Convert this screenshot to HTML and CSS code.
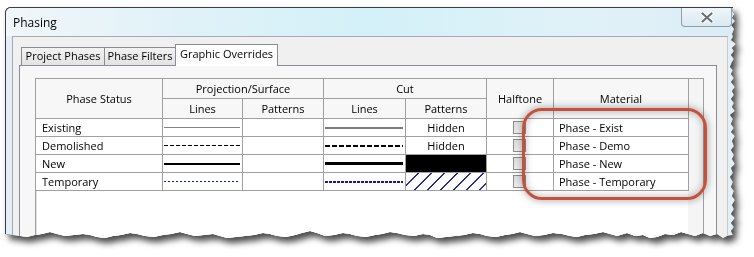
FILE: index.html
```html
<!DOCTYPE html>
<html>
<head>
  <meta charset="UTF-8" />
  <title>Phasing</title>
  <link rel="stylesheet" href="styles.css">
</head>
<body>

  <div class="shot">
    <div class="dialog">
      <div class="titlebar">
        <span class="title">Phasing</span>
        <button class="close" type="button">
          <svg width="14" height="11" viewBox="0 0 14 11">
            <path d="M2.5 1.5 L11.5 9.5 M11.5 1.5 L2.5 9.5" stroke="#fff" stroke-width="4.2" stroke-linecap="round"/>
            <path d="M2.5 1.5 L11.5 9.5 M11.5 1.5 L2.5 9.5" stroke="#6b6f74" stroke-width="2.2" stroke-linecap="round"/>
          </svg>
        </button>
      </div>

      <div class="frame">
        <div class="client">
          <div class="tabs">
            <div class="tab tab-phases">Project Phases</div>
            <div class="tab tab-filters">Phase Filters</div>
            <div class="tab tab-overrides active">Graphic Overrides</div>
          </div>

          <div class="panel">
            <div class="grid-box">
              <div class="grid">
                <div class="hd span2 c-status">Phase Status</div>
                <div class="hd span-proj">Projection/Surface</div>
                <div class="hd span-cut">Cut</div>
                <div class="hd span2 c-half">Halftone</div>
                <div class="hd span2 c-mat">Material</div>
                <div class="hd">Lines</div>
                <div class="hd">Patterns</div>
                <div class="hd">Lines</div>
                <div class="hd">Patterns</div>

                <!-- Existing -->
                <div class="cell name">Existing</div>
                <div class="cell"><div class="ln ln-thin-grey"></div></div>
                <div class="cell"></div>
                <div class="cell"><div class="ln ln-thick-grey"></div></div>
                <div class="cell center">Hidden</div>
                <div class="cell center"><span class="check"></span></div>
                <div class="cell mat">Phase - Exist</div>

                <!-- Demolished -->
                <div class="cell name">Demolished</div>
                <div class="cell"><div class="ln ln-dash"></div></div>
                <div class="cell"></div>
                <div class="cell"><div class="ln ln-dash-bold"></div></div>
                <div class="cell center">Hidden</div>
                <div class="cell center"><span class="check"></span></div>
                <div class="cell mat">Phase - Demo</div>

                <!-- New -->
                <div class="cell name">New</div>
                <div class="cell"><div class="ln ln-solid"></div></div>
                <div class="cell"></div>
                <div class="cell"><div class="ln ln-solid-bold"></div></div>
                <div class="cell fill-black"></div>
                <div class="cell center"><span class="check"></span></div>
                <div class="cell mat">Phase - New</div>

                <!-- Temporary -->
                <div class="cell name">Temporary</div>
                <div class="cell"><div class="ln ln-dot"></div></div>
                <div class="cell"></div>
                <div class="cell"><div class="ln ln-dot-bold"></div></div>
                <div class="cell fill-hatch"></div>
                <div class="cell center"><span class="check"></span></div>
                <div class="cell mat">Phase - Temporary</div>
              </div>

              <div class="callout"></div>
            </div>
          </div>
        </div>
      </div>
    </div>
  </div>

</body>
</html>
```

FILE: styles.css
```css
body {
  margin: 0;
  background: #fff;
  font-family: "Open Sans", "Liberation Sans", sans-serif;
  font-size: 11px;
  color: #000;
}

.shot {
  width: 740px;
  height: 250px;
  padding: 7px 0 0 5px;
  box-sizing: border-box;
  filter: drop-shadow(0 0 0.7px rgba(0, 0, 0, 0.95)) drop-shadow(4px 5px 3px rgba(0, 0, 0, 0.7));
}

.dialog {
  position: relative;
  width: 731px;
  height: 240px;
  border-left: 1px solid #3a3d42;
  border-top: 1px solid #3a3d42;
  border-radius: 6px 0 0 0;
  box-sizing: border-box;
  background: #e4eef4;
  overflow: hidden;
  clip-path: polygon(0 0, 728px 0, 727px 4px, 729px 7px, 727px 11px, 730px 14px, 726px 18px, 729px 22px,
    727px 27px, 728px 30px, 726px 33px, 731px 37px, 727px 41px, 729px 44px, 726px 48px, 729px 52px,
    727px 55px, 725px 60px, 728px 63px, 726px 67px, 729px 71px, 726px 75px, 730px 80px, 727px 84px,
    729px 88px, 726px 92px, 729px 96px, 727px 100px, 730px 104px, 725px 108px, 728px 112px,
    726px 117px, 729px 121px, 726px 125px, 730px 129px, 727px 134px, 729px 139px, 726px 143px,
    729px 148px, 727px 152px, 730px 157px, 726px 161px, 728px 166px, 725px 170px, 728px 175px,
    726px 180px, 729px 184px, 727px 189px, 730px 193px, 727px 198px, 729px 202px, 726px 207px,
    730px 211px, 726px 216px, 729px 220px, 726px 224px, 728px 228px,
    722px 229px, 718px 231px, 712px 227px, 705px 229px, 698px 226px, 690px 229px, 683px 227px,
    676px 225px, 668px 228px, 660px 227px, 652px 230px, 645px 231px, 638px 228px, 630px 229px,
    622px 226px, 612px 229px, 605px 227px, 598px 225px, 589px 227px, 580px 228px, 572px 230px,
    565px 229px, 557px 227px, 548px 226px, 539px 228px, 530px 229px, 522px 227px, 515px 225px,
    507px 227px, 500px 228px, 491px 230px, 482px 229px, 475px 227px, 468px 226px, 459px 228px,
    450px 229px, 441px 230px, 432px 231px, 425px 228px, 418px 227px, 409px 229px, 400px 228px,
    392px 226px, 385px 225px, 377px 227px, 370px 228px, 361px 230px, 352px 229px, 345px 227px,
    338px 226px, 329px 228px, 320px 229px, 312px 226px, 305px 224px, 297px 226px, 290px 228px,
    281px 230px, 272px 229px, 265px 227px, 258px 226px, 249px 228px, 240px 229px, 231px 230px,
    222px 231px, 215px 229px, 208px 227px, 199px 228px, 190px 229px, 182px 227px, 175px 225px,
    166px 227px, 158px 228px, 149px 230px, 140px 229px, 132px 227px, 125px 226px, 116px 228px,
    108px 229px, 100px 231px, 92px 230px, 85px 228px, 78px 227px, 69px 228px, 60px 229px,
    52px 227px, 45px 225px, 37px 227px, 30px 228px, 22px 230px, 15px 229px, 7px 228px, 0 227px);
}

/* title bar */

.titlebar {
  display: flex;
  align-items: flex-start;
  height: 28px;
  padding-left: 7px;
  background: linear-gradient(90deg, #f1f6f9 0%, #dff2f8 25%, #d4f0f8 50%, #e0f2f8 80%, #dcecf5 100%);
}

.title {
  margin-top: 6px;
  font-size: 12px;
  color: #000;
}

.close {
  margin-left: 675px;
  position: absolute;
  left: 0;
  width: 51px;
  height: 19px;
  padding: 0;
  border: 1px solid #8e9eaa;
  border-top: none;
  border-radius: 0 0 4px 4px;
  background: linear-gradient(#eef6fa, #dbe9f1);
  display: flex;
  align-items: center;
  justify-content: center;
}

/* window body */

.frame {
  padding: 0 8px 0 6px;
}

.client {
  border: 1px solid #a3acb4;
  border-right-color: #c4cbd1;
  background: #f0f0f0;
  padding: 7px 10px 0 6px;
  height: 220px;
}

.tabs {
  display: flex;
  align-items: flex-end;
  padding-left: 2px;
  height: 21px;
  position: relative;
  z-index: 1;
}

.tab {
  box-sizing: border-box;
  height: 18px;
  margin-right: -1px;
  border: 1px solid #898c95;
  border-bottom: none;
  background: linear-gradient(#f2f2f2, #e3e3e3);
  text-align: center;
  line-height: 16px;
  white-space: nowrap;
}

.tab-phases { width: 84px; }
.tab-filters { width: 72px; }

.tab-overrides {
  width: 103px;
  height: 22px;
  margin-bottom: -1px;
  background: #fff;
  line-height: 18px;
}

.panel {
  border: 1px solid #898c95;
  background: #f7f7f7;
  padding: 12px 12px 0 15px;
  height: 200px;
}

/* phase grid */

.grid-box {
  position: relative;
  height: 190px;
  border: 1px solid #a0a0a0;
  border-bottom: none;
  box-shadow: inset 1px 0 0 #e2e2e2;
  background: linear-gradient(90deg, #fff 652px, #f5f5f5 652px);
}

.grid {
  display: grid;
  grid-template-columns: 126px 79px 80px 81px 80px 66px 134px;
  grid-template-rows: 19px 19px 17px 17px 17px 17px;
  gap: 1px;
  width: 653px;
  box-sizing: border-box;
  background: #a0a0a0;
  border-right: 1px solid #a0a0a0;
  border-bottom: 1px solid #a0a0a0;
}

.hd {
  background: #f7f7f7;
  display: flex;
  align-items: center;
  justify-content: center;
  white-space: nowrap;
}

.span2 { grid-row: span 2; }
.span-proj { grid-column: span 2; }
.span-cut { grid-column: span 2; }

.cell {
  background: #fff;
  display: flex;
  align-items: center;
  white-space: nowrap;
}

.cell.name { padding-left: 6px; }
.cell.mat { padding-left: 5px; }
.cell.center { justify-content: center; }

.check {
  width: 11px;
  height: 11px;
  margin-left: -2px;
  border: 1px solid #8f8f8f;
  background: linear-gradient(135deg, #dcdcdc, #fafafa);
}

/* line samples */

.ln {
  flex: 1;
  margin: 0 2px 0 1px;
}

.ln-thin-grey { height: 1px; background: #858585; }
.ln-thick-grey { height: 2px; background: #7d7d7d; }
.ln-dash { height: 1px; background: repeating-linear-gradient(90deg, #000 0 4px, transparent 4px 6px); }
.ln-dash-bold { height: 2px; background: repeating-linear-gradient(90deg, #000 0 5px, transparent 5px 7px); }
.ln-solid { height: 2px; background: #000; }
.ln-solid-bold { height: 3px; background: #000; }
.ln-dot { height: 1px; background: repeating-linear-gradient(90deg, #1a1a8c 0 2px, transparent 2px 4px); }
.ln-dot-bold { height: 2px; background: repeating-linear-gradient(90deg, #1a1a8c 0 3px, transparent 3px 4px); }

.fill-black { background: #000; }

.fill-hatch {
  background: repeating-linear-gradient(135deg, #fff 0 8.2px, #2b2b95 8.2px 9.2px);
}

/* red highlight around material column */

.callout {
  position: absolute;
  left: 486px;
  top: 29px;
  width: 185px;
  height: 92px;
  box-sizing: border-box;
  border: 3px solid #c4513b;
  border-radius: 20px;
  box-shadow: 0 0 7px 1px rgba(0, 0, 0, 0.3), inset 0 0 7px 1px rgba(0, 0, 0, 0.25);
}
```
